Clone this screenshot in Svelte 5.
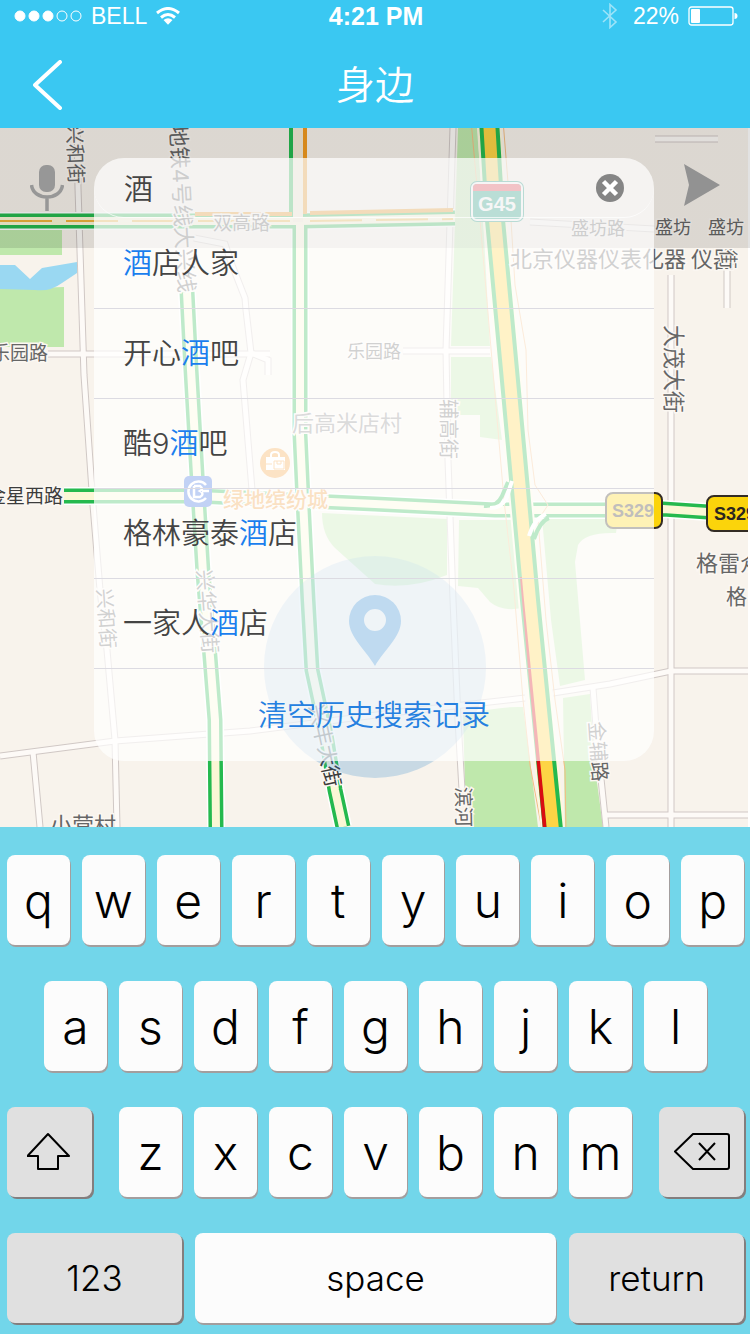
<script>
	let query = '酒'
	let places = ['酒店人家', '开心酒吧', '酷9酒吧', '格林豪泰酒店', '一家人酒店']

	const topKeys = 'qwertyuiop'.split('')
	const middleKeys = 'asdfghjkl'.split('')
	const bottomKeys = 'zxcvbnm'.split('')

	// map drawing, in map units
	const parks = [
		'M0 228H62V255H0Z',
		'M0 289L64 287V347H0Z',
		'M458 128H477L482 200L490 346H451Z',
		'M451 357H491L502 440L480 437V415H451Z',
		'M322 513L447 519V575Q410 590 375 584L335 548Q322 535 322 513Z',
		'M459 520H513L522 608Q502 612 490 602L478 588L458 586Z',
		'M542 518H618L616 533Q585 532 578 545L575 562L585 680L560 686L551 620Z',
		'M463 715Q500 706 523 707L530 760L538 827H474L465 787Z',
		'M563 698L590 694L594 760L603 827H565Z'
	]

	const lanes = [
		'M77 120L78 188L84 375L93 505L100 590L107 650L115 740L117 827',
		'M0 756L115 741L250 731L400 712L525 698M553 693L610 684L671 671H750',
		'M33 752L40 827',
		'M671 275V827',
		'M606 815H750',
		'M593 688L597 740L606 827',
		'M453 128L446 350L448 460L453 600L458 720L462 790',
		'M48 354H270M403 351H490',
		'M194 238L225 244L232 265L245 298L246 310L251 353L243 380L252 490',
		'M251 353L268 360V375',
		'M727 270V308',
		'M655 139H718',
		'M530 222L654 229'
	]

	const greenRoads = [
		'M187 292L191 370L198 492L203 573L210 657L215 720L216 827',
		'M300 221V435L303 500L308 600L312 670L326 735L335 790L343 827',
		'M64 496L198 496L375 504L495 510H605L663 509L708 512',
		'M0 221H300L455 218'
	]

	const labels = [
		{ text: '双高路', x: 213, y: 230, size: 19 },
		{ text: '盛坊路', x: 571, y: 235, size: 18 },
		{ text: '盛坊', x: 655, y: 234, size: 18 },
		{ text: '盛坊', x: 708, y: 234, size: 18 },
		{ text: '北京仪器仪表化器', x: 510, y: 267, size: 22 },
		{ text: '仪器', x: 691, y: 267, size: 22 },
		{ text: '乐园路', x: -9, y: 360, size: 19 },
		{ text: '乐园路', x: 347, y: 358, size: 18 },
		{ text: '后高米店村', x: 292, y: 431, size: 22, light: true },
		{ text: '金星西路', x: -13, y: 503, size: 19, dark: true },
		{ text: '格雷众', x: 696, y: 571, size: 22 },
		{ text: '格雷', x: 726, y: 604, size: 21 },
		{ text: '小营村', x: 50, y: 833, size: 22 },
		{ text: '兴和街', x: 67, y: 124, size: 20, turn: 88 },
		{ text: '地铁4号线大兴线', x: 170, y: 125, size: 22, turn: 87 },
		{ text: '街', x: 721, y: 250, size: 19, turn: 90 },
		{ text: '大茂大街', x: 666, y: 325, size: 22, turn: 90 },
		{ text: '辅高街', x: 441, y: 399, size: 20, turn: 90 },
		{ text: '兴和街', x: 97, y: 589, size: 20, turn: 86 },
		{ text: '兴华大街', x: 197, y: 570, size: 21, turn: 86 },
		{ text: '兴丰大街', x: 309, y: 706, size: 21, turn: 78, dark: true },
		{ text: '滨河', x: 456, y: 787, size: 20, turn: 89 },
		{ text: '金辅路', x: 589, y: 722, size: 20, turn: 86 }
	]

	function split(name, word) {
		const at = word ? name.indexOf(word) : -1
		if (at < 0) return [name, '', '']
		return [name.slice(0, at), word, name.slice(at + word.length)]
	}

	function type(letter) {
		query += letter
	}

	function backspace() {
		query = query.slice(0, -1)
	}
</script>

<header>
	<div class="status">
		<div class="carrier">
			<svg width="68" height="14" viewBox="0 0 68 14" aria-hidden="true">
				<g fill="#fff" stroke="#fff">
					<circle cx="6" cy="7" r="5" />
					<circle cx="20" cy="7" r="5" />
					<circle cx="34" cy="7" r="5" />
					<circle cx="48" cy="7" r="5" fill="none" />
					<circle cx="62" cy="7" r="5" fill="none" />
				</g>
			</svg>
			<span>BELL</span>
			<svg width="24" height="18" viewBox="0 0 24 18" aria-hidden="true">
				<g fill="none" stroke="#fff" stroke-width="3">
					<path d="M1 6Q12 -3 23 6" />
					<path d="M5 10.500Q12 4.500 19 10.500" />
				</g>
				<path d="M7.500 13Q12 9.500 16.500 13L12 17.700Z" fill="#fff" />
			</svg>
		</div>
		<strong>4:21 PM</strong>
		<div class="power">
			<svg class="bluetooth" width="16" height="26" viewBox="0 0 16 26" aria-hidden="true">
				<path d="M1 7L14 19L8 24.500V1.500L14 7L1 19" fill="none" stroke="#fff" stroke-width="1.600" />
			</svg>
			<span>22%</span>
			<svg width="50" height="20" viewBox="0 0 50 20" aria-hidden="true">
				<rect x="1" y="1" width="44" height="18" rx="2.500" fill="none" stroke="#fff" stroke-width="1.300" />
				<rect x="3" y="3" width="9" height="14" rx="1" fill="#fff" />
				<path d="M46.500 7Q49.500 7 49.500 10T46.500 13Z" fill="#fff" />
			</svg>
		</div>
	</div>
	<nav>
		<button class="back" aria-label="返回">
			<svg width="30" height="50" viewBox="0 0 30 50">
				<path d="M27 2L2 25L27 48" fill="none" stroke="#fff" stroke-width="4" stroke-linecap="round" stroke-linejoin="round" />
			</svg>
		</button>
		<h1>身边</h1>
	</nav>
</header>

<main>
	<svg class="map" viewBox="0 128 750 699" preserveAspectRatio="xMidYMin slice" aria-hidden="true">
		<rect y="128" width="750" height="699" fill="#f8f3ec" />
		{#each parks as d}
			<path {d} fill="#bfe8ac" />
		{/each}
		<path d="M0 265H15L30 279L42 268L77 262V273L62 283Q50 292 35 290L0 289Z" fill="#9ad8f2" />
		<g fill="none">
			{#each lanes as d}
				<path {d} stroke="#d0c8c5" stroke-width="7" />
			{/each}
			{#each lanes as d}
				<path {d} stroke="#fdfaf7" stroke-width="5" />
			{/each}

			<!-- streets with traffic -->
			{#each greenRoads as d}
				<path {d} stroke="#fff" stroke-width="18" />
			{/each}
			{#each greenRoads as d}
				<path {d} stroke="#25b94e" stroke-width="15" />
			{/each}
			<path d="M298 120V214" stroke="#25b94e" stroke-width="18" />
			<path d="M305 120V214" stroke="#f19a1f" stroke-width="4" />
			<path d="M310 213L453 210M195 214H292" stroke="#f19a1f" stroke-width="4" />
			{#each greenRoads as d}
				<path {d} stroke="#fbf7d6" stroke-width="8" />
			{/each}
			<path d="M298 120V222" stroke="#f5ead5" stroke-width="10" />
			<path d="M0 221H290M310 221L453 219" stroke="#f0b53c" stroke-width="2" stroke-dasharray="52 14" />

			<!-- highway -->
			<path d="M471 120L480 220L492 360L504 500L514 590L523 700L530 765L542 830M503 120L511 220L515 285L526 350L528 430L535 485L548 505L538 520L546 620L555 700L565 770L566 830" stroke="#f3bd83" stroke-width="1" />
			<path d="M489 120L495 220L509 370L520 490L530 600L542 720L553 830" stroke="#fff8dc" stroke-width="24" />
			<path d="M489 120L495 220L509 370L520 490L530 600L542 720L553 830" stroke="#25b94e" stroke-width="20" />
			<path d="M522 577L530 668L545 830" stroke="#d90d12" stroke-width="4" />
			<path d="M489 120L495 220L509 370L520 490L530 600L542 720L553 830" stroke="#fdd445" stroke-width="12" />
			<path d="M508 482L502 496Q497 507 484 506M549 518Q540 521 534 539" stroke="#25b94e" stroke-width="4" />
			<path d="M512 481L507 497Q502 508 490 508M546 514Q534 519 529 536" stroke="#fff" stroke-width="4" />
		</g>

		{#each labels as { text, x, y, size, turn = 0, light, dark }}
			<text class:light class:dark font-size={size} transform="translate({x} {y}) rotate({turn})">{text}</text>
		{/each}

		<text class="mall" x="223" y="507" font-size="21">绿地缤纷城</text>
		<circle cx="275" cy="463" r="15" fill="#f4a03c" />
		<path d="M266 457H285V470H266Z" fill="#fff" />
		<path d="M271 457V455Q271 452 275 452T279 455V457" fill="none" stroke="#fff" stroke-width="2" />
		<path d="M274 461H284V469H274ZM277 461V464H281V461M266 464H272" fill="none" stroke="#f4a03c" />

		<!-- metro station -->
		<rect x="184" y="476" width="28" height="31" rx="5" fill="#3568dc" />
		<path d="M206 485A10 10 0 1 0 206 498" fill="none" stroke="#fff" stroke-width="2.500" />
		<path d="M194 486H200Q204 489 200 491Q205 494 200 497H194V486M202 491H209" fill="none" stroke="#fff" stroke-width="2.500" />

		<!-- route shields -->
		<rect x="470" y="181" width="54" height="41" rx="7" fill="#16977d" />
		<rect x="472" y="183" width="50" height="37" rx="5" fill="#1ba286" stroke="#fff" stroke-width="2" />
		<path d="M473 191V188Q473 184 477 184H517Q521 184 521 188V191Z" fill="#ee3d4b" />
		<text class="shield white" x="497" y="211">G45</text>
		<rect x="606" y="493" width="56" height="35" rx="7" fill="#fbd40b" stroke="#332c24" stroke-width="2" />
		<text class="shield" x="633" y="517">S329</text>
		<rect x="707" y="496" width="56" height="35" rx="7" fill="#fbd40b" stroke="#332c24" stroke-width="2" />
		<text class="shield" x="735" y="520">S329</text>

		<circle cx="375" cy="667" r="111" fill="#2a84cd" fill-opacity="0.230" />
		<path fill-rule="evenodd" d="M375 666C366 650 349 637 349 621A26 26 0 1 1 401 621C401 637 384 650 375 666ZM375 609A11 11 0 1 0 375 631A11 11 0 1 0 375 609Z" fill="#2a84cd" />
		<rect x="748" y="128" width="2" height="699" fill="#fff" />
	</svg>

	<div class="overlay">
		<button class="tool" aria-label="语音输入">
			<svg width="34" height="46" viewBox="0 0 34 46">
				<rect x="9" y="0" width="16" height="27" rx="7" fill="#979797" />
				<path d="M1.500 20C3 36 31 36 32.500 20M17 32V46" fill="none" stroke="#979797" stroke-width="3.500" />
			</svg>
		</button>
		<div class="panel">
			<form on:submit|preventDefault>
				<input type="text" aria-label="搜索" bind:value={query} />
				<button type="button" class="clear" aria-label="清除" on:click={() => (query = '')}>
					<svg width="28" height="28" viewBox="0 0 28 28">
						<circle cx="14" cy="14" r="14" fill="#858585" />
						<path d="M7.500 7.500L20.500 20.500M20.500 7.500L7.500 20.500" stroke="#fff" stroke-width="4.500" />
					</svg>
				</button>
			</form>
			<ul>
				{#each places as place}
					{@const parts = split(place, query)}
					<li>
						<button on:click={() => (query = place)}>{parts[0]}<mark>{parts[1]}</mark>{parts[2]}</button>
					</li>
				{/each}
			</ul>
			<button class="history" on:click={() => (places = [])}>清空历史搜索记录</button>
		</div>
		<button class="tool" aria-label="定位">
			<svg width="36" height="48" viewBox="0 0 36 48">
				<path d="M0 0L36 21L0 42L5 21Z" fill="#929292" />
			</svg>
		</button>
	</div>
</main>

<div class="keyboard">
	<div class="keys">
		{#each topKeys as key}
			<button on:click={() => type(key)}>{key}</button>
		{/each}
	</div>
	<div class="keys inset">
		{#each middleKeys as key}
			<button on:click={() => type(key)}>{key}</button>
		{/each}
	</div>
	<div class="shift-row">
		<button class="grey" aria-label="shift">
			<svg width="46" height="40" viewBox="0 0 46 40">
				<path d="M21 2L42 24H31V37H11V24H0.500Z" fill="none" stroke="#000" stroke-width="2" stroke-linejoin="round" />
			</svg>
		</button>
		<div class="keys">
			{#each bottomKeys as key}
				<button on:click={() => type(key)}>{key}</button>
			{/each}
		</div>
		<button class="grey" aria-label="delete" on:click={backspace}>
			<svg width="56" height="38" viewBox="0 0 56 38">
				<path d="M19 1H53Q55 1 55 3V34Q55 36 53 36H19L1 18.500ZM25 10L41 27M41 10L25 27" fill="none" stroke="#000" stroke-width="2" stroke-linejoin="round" />
			</svg>
		</button>
	</div>
	<div class="space-row">
		<button class="grey">123</button>
		<button on:click={() => type(' ')}>space</button>
		<button class="grey">return</button>
	</div>
</div>

<style>
	:global(body) {
		margin: 0;
		background: #72d6ea;
		font-family: Inter, "Noto Sans CJK SC", sans-serif;
		font-weight: 300;
	}

	button, input {
		border: none;
		background: none;
		font: inherit;
		padding: 0;
		margin: 0;
	}

	button {
		cursor: pointer;
	}

	svg {
		display: block;
		flex: none;
	}

	header {
		background: #3ac8f2;
		color: #fff;
	}

	.status {
		display: grid;
		grid-template-columns: 1fr auto 1fr;
		align-items: center;
		height: 32px;
		padding: 0 12px 0 14px;
		font: 23px/32px "Liberation Sans", sans-serif;
	}

	.status strong {
		font-size: 25px;
	}

	.carrier, .power {
		display: flex;
		align-items: center;
		gap: 9px;
	}

	.power {
		justify-content: flex-end;
	}

	.bluetooth {
		opacity: 0.5;
		margin-right: 6px;
	}

	nav {
		display: grid;
		grid-template-columns: 94px 1fr 94px;
		align-items: center;
		height: 96px;
	}

	.back {
		display: flex;
		align-items: center;
		height: 96px;
		padding: 10px 0 0 33px;
		box-sizing: border-box;
	}

	h1 {
		margin: 0;
		padding-top: 10px;
		font-size: 39px;
		line-height: 60px;
		font-weight: 350;
		text-align: center;
	}

	main {
		position: relative;
		overflow: hidden;
	}

	.map {
		position: absolute;
		inset: 0;
		width: 100%;
		height: 100%;
	}

	.map text {
		fill: #666;
		stroke: #fbf7f2;
		stroke-width: 3px;
		paint-order: stroke;
		font-weight: 400;
	}

	.map .light {
		fill: #858585;
	}

	.map .dark {
		fill: #3c3c3c;
	}

	.map .mall {
		fill: #ee9a38;
		font-weight: 500;
	}

	.map .shield {
		font: bold 18px "Liberation Sans", sans-serif;
		fill: #2c2620;
		stroke: none;
		text-anchor: middle;
	}

	.map .white {
		font-size: 20px;
		fill: #fff;
	}

	.overlay {
		position: relative;
		display: grid;
		grid-template-columns: 94px 1fr 96px;
		align-items: start;
		padding: 30px 0 66px;
		background: linear-gradient(rgba(0, 0, 0, 0.115), rgba(0, 0, 0, 0.115)) top / 100% 120px no-repeat;
	}

	.tool {
		display: flex;
		align-items: center;
		justify-content: center;
		height: 60px;
	}

	.panel {
		overflow: hidden;
		border-radius: 30px;
		background: rgba(255, 255, 255, 0.7);
		color: #444;
		font-size: 29px;
		font-weight: 350;
	}

	form {
		display: flex;
		align-items: center;
		box-sizing: border-box;
		height: 60px;
		padding: 0 30px;
		border-bottom: 1px solid rgba(255, 255, 255, 0.7);
		border-radius: 30px;
	}

	input {
		flex: 1;
		min-width: 0;
		height: 59px;
		padding-bottom: 2px;
		box-sizing: border-box;
		color: #444;
		font-size: 29px;
		outline: none;
	}

	ul {
		list-style: none;
		margin: 0;
		padding: 0;
	}

	li button {
		box-sizing: border-box;
		width: 100%;
		height: 91px;
		padding: 0 0 4px 29px;
		border-bottom: 1px solid #dcdbe2;
		color: #444;
		text-align: left;
	}

	li {
		height: 90px;
	}

	mark {
		background: none;
		color: #1a7eee;
	}

	.history {
		display: block;
		width: 100%;
		height: 93px;
		padding-bottom: 4px;
		color: #2580e0;
	}

	.keyboard {
		display: grid;
		gap: 36px;
		padding: 28px 6px 11px 7px;
		background: #72d6ea;
	}

	.keys {
		display: flex;
		gap: 12px;
	}

	.inset {
		padding: 0 37px;
	}

	.keyboard button {
		display: flex;
		flex: 1;
		align-items: center;
		justify-content: center;
		min-width: 0;
		height: 90px;
		border-radius: 8px;
		background: #fcfcfc;
		box-shadow: 1px 2px 0 #a39e9e;
		color: #000;
		font-size: 48px;
	}

	.keyboard .grey {
		background: #e0e0e0;
		box-shadow: 2px 2px 0 #837e7e;
	}

	.shift-row {
		display: grid;
		grid-template-columns: 85fr 513fr 85fr;
		gap: 27px;
	}

	.space-row {
		display: grid;
		grid-template-columns: 175fr 362fr 175fr;
		gap: 13px;
	}

	.keyboard .space-row button {
		font-size: 35px;
	}
</style>
